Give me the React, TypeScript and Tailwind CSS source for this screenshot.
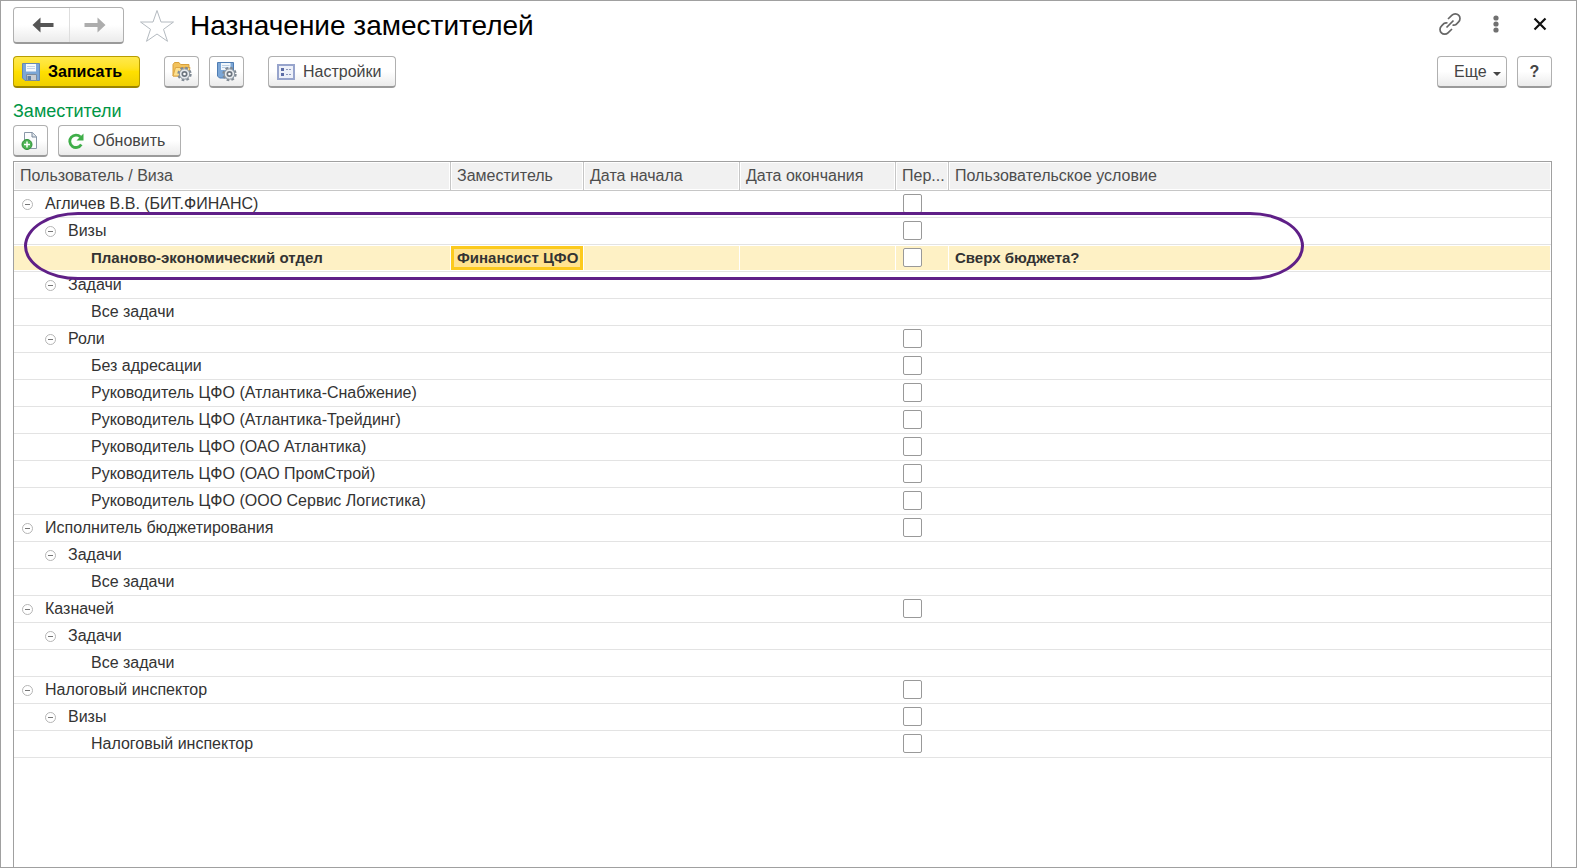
import React, { useState } from 'react';
import { clsx } from 'clsx';

interface Row {
  level: 0 | 1 | 2;
  title: string;
  checkbox?: boolean;
  deputy?: string;
  condition?: string;
  active?: boolean;
}

const ROWS: Row[] = [
  { level: 0, title: 'Агличев В.В. (БИТ.ФИНАНС)', checkbox: true },
  { level: 1, title: 'Визы', checkbox: true },
  {
    level: 2,
    title: 'Планово-экономический отдел',
    checkbox: true,
    deputy: 'Финансист ЦФО',
    condition: 'Сверх бюджета?',
    active: true,
  },
  { level: 1, title: 'Задачи' },
  { level: 2, title: 'Все задачи' },
  { level: 1, title: 'Роли', checkbox: true },
  { level: 2, title: 'Без адресации', checkbox: true },
  { level: 2, title: 'Руководитель ЦФО (Атлантика-Снабжение)', checkbox: true },
  { level: 2, title: 'Руководитель ЦФО (Атлантика-Трейдинг)', checkbox: true },
  { level: 2, title: 'Руководитель ЦФО (ОАО Атлантика)', checkbox: true },
  { level: 2, title: 'Руководитель ЦФО (ОАО ПромСтрой)', checkbox: true },
  { level: 2, title: 'Руководитель ЦФО (ООО Сервис Логистика)', checkbox: true },
  { level: 0, title: 'Исполнитель бюджетирования', checkbox: true },
  { level: 1, title: 'Задачи' },
  { level: 2, title: 'Все задачи' },
  { level: 0, title: 'Казначей', checkbox: true },
  { level: 1, title: 'Задачи' },
  { level: 2, title: 'Все задачи' },
  { level: 0, title: 'Налоговый инспектор', checkbox: true },
  { level: 1, title: 'Визы', checkbox: true },
  { level: 2, title: 'Налоговый инспектор', checkbox: true },
];

const COLUMNS = [
  'Пользователь / Виза',
  'Заместитель',
  'Дата начала',
  'Дата окончания',
  'Пер...',
  'Пользовательское условие',
];

const INDENT = ['pl-2', 'pl-[31px]', 'pl-[77px]'];

const BUTTON =
  'flex h-8 items-center rounded-[4px] border border-[#b0b0b0] border-b-2 border-b-[#9a9a9a] bg-linear-to-b from-white from-50% to-[#ebebeb] text-[#444]';

function FloppyIcon() {
  return (
    <svg width="18" height="18" viewBox="0 0 18 18" aria-hidden="true">
      <path d="M.5.5h17v17H3L.5 15z" fill="#7ba6d6" stroke="#6488b4" />
      <path d="M4 1h10v7.500H4z" fill="#f6f9fc" />
      <path d="M5 3.500h8M5 5.500h8" stroke="#c3d3e6" />
      <path d="M4.500 11.500h10v6h-10z" fill="#c9cdd2" stroke="#7c8b9c" />
      <path d="M5.500 13h3.500v4H5.500z" fill="#5c7ea6" />
    </svg>
  );
}

function Gear() {
  return (
    <g>
      <circle cx="13.500" cy="13" r="6" fill="none" stroke="#7f8993" strokeWidth="2.400" strokeDasharray="2.600 2.110" />
      <circle cx="13.500" cy="13" r="5.200" fill="#e6eaee" stroke="#87919b" />
      <circle cx="13.500" cy="13" r="2.200" fill="#fff" stroke="#6d7680" strokeWidth="1.700" />
    </g>
  );
}

function FolderGearIcon() {
  return (
    <svg width="21" height="21" viewBox="0 0 21 21" aria-hidden="true">
      <path d="M2 15V3.500L3.500 1.500h4.500l1.500 2H18V15z" fill="#f2c25c" stroke="#d9a03a" />
      <path d="M2 15 4.500 6.500h14.500L17 15z" fill="#fce08e" stroke="#dea646" />
      <Gear />
    </svg>
  );
}

function FloppyGearIcon() {
  return (
    <svg width="21" height="21" viewBox="0 0 21 21" aria-hidden="true">
      <path d="M1.500 1.500h16v15.500H3.500l-2-2z" fill="#7ba6d6" stroke="#4f7db3" />
      <path d="M5 2h9.500v7H5z" fill="#f1f6fb" />
      <path d="M6 4.500h7.500M6 6.500h7.500" stroke="#b9cde2" />
      <Gear />
    </svg>
  );
}

function SettingsListIcon() {
  return (
    <svg width="18" height="16" viewBox="0 0 18 16" aria-hidden="true">
      <path d="M1 1h16v14H1z" fill="#eef1f9" stroke="#97a4cc" strokeWidth="2" />
      <path d="M4 4h3v3H4zM4 9h3v3H4z" fill="#5d6da6" />
      <path d="M9 5.500h5M9 10.500h5" stroke="#8c98bb" strokeDasharray="2 1" />
    </svg>
  );
}

function AddDocumentIcon() {
  return (
    <svg width="18" height="20" viewBox="0 0 18 20" aria-hidden="true">
      <path d="M3.500 1.500h8l4 4v12h-12z" fill="#fbfcfd" stroke="#8a98a8" />
      <path d="M11 1.500v4.500h4.500" fill="#dfe5ea" stroke="#78889b" />
      <circle cx="6" cy="13.500" r="5" fill="#4db454" stroke="#2c8f36" />
      <path d="M6 10.500v6M3 13.500h6" stroke="#fff" strokeWidth="1.500" />
    </svg>
  );
}

function RefreshIcon() {
  return (
    <svg width="16" height="16" viewBox="0 0 16 16" aria-hidden="true">
      <path d="M12.500 4A6.200 6.200 0 1 0 13.300 11.500" fill="none" stroke="#3fae49" strokeWidth="2.800" />
      <path d="M15.500 .5v7H8.500z" fill="#3fae49" />
    </svg>
  );
}

function ArrowIcon({ className }: { className: string }) {
  return (
    <svg width="22" height="16" viewBox="0 0 22 16" className={className} aria-hidden="true">
      <path d="M.5 8 8.500 .5V6h13v4h-13v5.500z" fill="currentColor" />
    </svg>
  );
}

function LinkIcon() {
  return (
    <svg width="24" height="24" viewBox="0 0 24 24" fill="none" stroke="#666" strokeWidth="1.700" aria-hidden="true">
      <path d="M10 7 14 3.200a4.600 4.600 0 0 1 6.600 0 4.600 4.600 0 0 1 0 6.600L18 12.500q-1.500 1-3.500.5" />
      <path d="M14 17 10 20.800a4.600 4.600 0 0 1-6.600 0 4.600 4.600 0 0 1 0-6.600L6 11.500q1.500-1 3.500-.5" />
      <path d="m8.500 15.500 7-7" />
    </svg>
  );
}

function Collapser() {
  return (
    <button type="button" aria-label="Свернуть" className="mr-3 shrink-0">
      <svg width="11" height="11" viewBox="0 0 11 11" className="block" aria-hidden="true">
        <circle cx="5.500" cy="5.500" r="5" fill="#fff" stroke="#b5b5b5" />
        <path d="M3 5.500h5" stroke="#777" />
      </svg>
    </button>
  );
}

function TreeRow({ row }: { row: Row }) {
  const [checked, setChecked] = useState(false);
  const cell = clsx('my-px flex h-6 items-center whitespace-nowrap', row.active && 'mr-px bg-[#fef1c5]');

  return (
    <tr className={clsx('text-[#333]', row.active ? 'text-[15px] font-bold' : 'text-base')}>
      <td className="border-b border-[#e3e3e3] p-0">
        <div className={clsx(cell, INDENT[row.level])}>
          {row.level < 2 && <Collapser />}
          {row.title}
        </div>
      </td>
      <td className="border-b border-[#e3e3e3] p-0">
        <div className={clsx(cell, row.deputy ? 'border-3 border-[#fcca1e] !bg-[#ffe391] pl-[3px]' : 'pl-1.5')}>
          {row.deputy}
        </div>
      </td>
      <td className="border-b border-[#e3e3e3] p-0">
        <div className={cell} />
      </td>
      <td className="border-b border-[#e3e3e3] p-0">
        <div className={cell} />
      </td>
      <td className="border-b border-[#e3e3e3] p-0">
        <div className={clsx(cell, 'pb-px pl-[7px]')}>
          {row.checkbox && (
            <input
              type="checkbox"
              aria-label={row.title}
              checked={checked}
              onChange={(e) => setChecked(e.target.checked)}
              className="size-[19px] appearance-none rounded-[2px] border border-[#999] bg-white checked:bg-[#fcca1e]"
            />
          )}
        </div>
      </td>
      <td className="border-b border-[#e3e3e3] p-0">
        <div className={clsx(cell, 'mr-0 pl-1.5')}>{row.condition}</div>
      </td>
    </tr>
  );
}

export default function App() {
  return (
    <main className="flex min-h-screen flex-col border border-[#a0a0a0] bg-white pt-1.5 pr-6 pl-3 font-['Liberation_Sans',Arial,sans-serif] text-base">
      <header className="flex items-center">
        <div className="flex h-[37px] w-[111px] rounded-[4px] border border-[#b0b0b0] border-b-2 border-b-[#9a9a9a] bg-linear-to-b from-white from-50% to-[#ebebeb]">
          <button type="button" aria-label="Назад" className="flex w-14 items-center justify-center border-r border-[#dedede] pl-0.5">
            <ArrowIcon className="text-[#555]" />
          </button>
          <button type="button" aria-label="Вперед" className="flex flex-1 items-center justify-center pr-1">
            <ArrowIcon className="rotate-180 text-[#adadad]" />
          </button>
        </div>
        <button type="button" aria-label="Добавить в избранное" className="ml-[15px]">
          <svg width="36" height="34" viewBox="0 0 36 34" className="block" aria-hidden="true">
            <path
              d="M18 1.500 22 13h12.500l-10 7.300 4 12L18 25 7.500 32.300l4-12L1.500 13H14z"
              fill="#fff"
              stroke="#b4bac0"
            />
          </svg>
        </button>
        <h1 className="ml-[15px] text-[28px] leading-9 text-black">Назначение заместителей</h1>
        <div className="ml-auto flex items-center pb-1">
          <button type="button" aria-label="Получить ссылку" className="mr-[31px]">
            <LinkIcon />
          </button>
          <button type="button" aria-label="Меню" className="mr-[34px]">
            <svg width="6" height="18" viewBox="0 0 6 18" fill="#707070" aria-hidden="true">
              <circle cx="3" cy="3" r="2.600" />
              <circle cx="3" cy="9" r="2.600" />
              <circle cx="3" cy="15" r="2.600" />
            </svg>
          </button>
          <button type="button" aria-label="Закрыть" className="mr-[5px]">
            <svg width="14" height="14" viewBox="0 0 14 14" aria-hidden="true">
              <path d="m1.500 1.500 11 11m0-11-11 11" stroke="#111" strokeWidth="2.200" />
            </svg>
          </button>
        </div>
      </header>

      <div className="mt-3 flex items-center">
        <button
          type="button"
          className="flex h-8 w-[127px] items-center rounded-[4px] border border-[#b89d00] border-b-2 border-b-[#9c8500] bg-linear-to-b from-[#ffe94a] via-[#ffe000] to-[#efcf00] pl-2 font-bold text-black"
        >
          <FloppyIcon />
          <span className="ml-2">Записать</span>
        </button>
        <button type="button" aria-label="Загрузить настройки" className={clsx(BUTTON, 'ml-6 w-[35px] justify-center')}>
          <FolderGearIcon />
        </button>
        <button type="button" aria-label="Сохранить настройки" className={clsx(BUTTON, 'ml-2.5 w-[35px] justify-center')}>
          <FloppyGearIcon />
        </button>
        <button type="button" className={clsx(BUTTON, 'ml-6 w-32 pl-2')}>
          <SettingsListIcon />
          <span className="ml-2">Настройки</span>
        </button>
        <button type="button" className={clsx(BUTTON, 'ml-auto w-[70px] pl-4')}>
          Еще
          <svg width="8" height="4" viewBox="0 0 8 4" className="mt-1 ml-1.5 shrink-0" aria-hidden="true">
            <path d="M0 0h8L4 4z" fill="#444" />
          </svg>
        </button>
        <button type="button" aria-label="Справка" className={clsx(BUTTON, 'ml-2.5 w-[35px] justify-center font-bold')}>
          ?
        </button>
      </div>

      <h2 className="pt-[11px] pb-0.5 text-lg leading-6 text-[#009646]">Заместители</h2>

      <div className="flex items-center gap-2.5">
        <button type="button" aria-label="Добавить" className={clsx(BUTTON, 'w-[35px] pl-[7px]')}>
          <AddDocumentIcon />
        </button>
        <button type="button" className={clsx(BUTTON, 'w-[123px] pl-[9px]')}>
          <RefreshIcon />
          <span className="ml-[9px]">Обновить</span>
        </button>
      </div>

      <section className="relative mt-1 flex-1 border border-b-0 border-[#a0a0a0]">
        <table className="w-full table-fixed border-separate border-spacing-0">
          <colgroup>
            <col className="w-[437px]" />
            <col className="w-[133px]" />
            <col className="w-[156px]" />
            <col className="w-[156px]" />
            <col className="w-[53px]" />
            <col />
          </colgroup>
          <thead>
            <tr>
              {COLUMNS.map((column) => (
                <th
                  key={column}
                  scope="col"
                  className="border-r border-b border-[#c6c6c6] p-px text-left font-normal text-[#4d4d4d] last:border-r-0"
                >
                  <div className="h-[26px] overflow-hidden bg-[#f1f1f1] pl-[5px] leading-[26px] whitespace-nowrap">{column}</div>
                </th>
              ))}
            </tr>
          </thead>
          <tbody>
            {ROWS.map((row, index) => (
              <TreeRow key={index} row={row} />
            ))}
          </tbody>
        </table>

        {/* outline around the approvals of the first user */}
        <div className="pointer-events-none absolute top-[50px] left-2.5 h-[68px] w-[1280px] rounded-[54px/34px] border-3 border-[#5f1f87]" />
      </section>
    </main>
  );
}
